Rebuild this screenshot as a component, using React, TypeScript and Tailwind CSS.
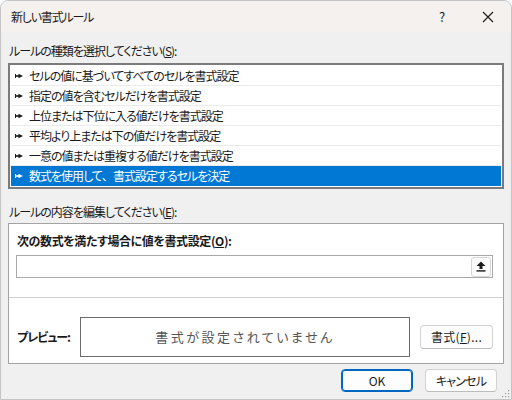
import React from "react";

const rules = [
  "セルの値に基づいてすべてのセルを書式設定",
  "指定の値を含むセルだけを書式設定",
  "上位または下位に入る値だけを書式設定",
  "平均より上または下の値だけを書式設定",
  "一意の値または重複する値だけを書式設定",
  "数式を使用して、書式設定するセルを決定",
];

const Pointer = ({ color }: { color: string }) => (
  <svg width="8" height="6" viewBox="0 0 8 6" className="shrink-0">
    <rect x="0" y="1" width="1" height="4" fill={color} />
    <rect x="1" y="2.2" width="3" height="1.6" fill={color} />
    <path d="M3.5 0.8 L8 3 L3.5 5.2 Z" fill={color} />
  </svg>
);

// full-width comma keeps its em width, as in the original dialog
const RuleText = ({ text }: { text: string }) => {
  const parts = text.split("、");
  return (
    <span className="text-[12px] tracking-[-1px]">
      {parts.map((p, i) => (
        <React.Fragment key={i}>
          {p}
          {i < parts.length - 1 && <span className="inline-block w-[11px]">、</span>}
        </React.Fragment>
      ))}
    </span>
  );
};

const App = () => {
  const selected = 5;
  return (
    <div className="w-[512px] h-[400px] bg-white font-['Noto_Sans_CJK_JP','Noto_Sans',sans-serif] text-[12px] leading-[14px] text-[#1a1a1a] [font-feature-settings:'palt']">
      <div className="w-full h-full flex flex-col rounded-t-[8px] border border-[#c4c4c4] bg-[#f0f0f0] overflow-hidden relative">
        {/* title bar */}
        <div className="h-[31px] shrink-0 bg-[#f4f1ef] flex items-center pl-[10px]">
          <span className="flex-1 pt-[1px] tracking-[-1.2px]">新しい書式ルール</span>
          <span className="w-[12px] text-[13px] mr-[34px] text-center">?</span>
          <svg width="12" height="12" viewBox="0 0 12 12" className="mr-[17px]">
            <path d="M1 1 L11 11 M11 1 L1 11" stroke="#1a1a1a" strokeWidth="1.1" />
          </svg>
        </div>

        <div className="flex flex-col px-[7px]">
          <div className="mt-[12px] pl-[1px] tracking-[-1px]">
            ルールの種類を選択してください(<span className="underline">S</span>):
          </div>

          {/* rule type list */}
          <div className="mt-[5px] h-[126px] border-2 border-[#7b7b7b] bg-white px-[1px] py-[1px]">
            {rules.map((r, i) => (
              <div
                key={i}
                className={
                  i === selected
                    ? "h-[20px] flex items-center gap-[6px] pl-[4px] bg-[#0078d4] text-white"
                    : "h-[20px] flex items-center gap-[6px] pl-[4px] border-b border-[#ebebeb]"
                }
              >
                <Pointer color={i === selected ? "#ffffff" : "#1a1a1a"} />
                <RuleText text={r} />
              </div>
            ))}
          </div>

          <div className="mt-[16px] pl-[1px] tracking-[-1px]">
            ルールの内容を編集してください(<span className="underline">E</span>):
          </div>

          {/* rule description panel */}
          <div className="mt-[4px] h-[141px] border border-[#a3a3a3] bg-white flex flex-col">
            <div className="mt-[10px] pl-[8px] font-bold tracking-[-0.4px]">
              次の数式を満たす場合に値を書式設定(<span className="underline">O</span>):
            </div>
            <div className="mt-[7px] ml-[7px] mr-[10px] h-[23px] border border-[#a9a9a9] flex items-center justify-end pr-[1px]">
              <div className="w-[20px] h-[20px] rounded-[3px] border border-[#d6d6d6] bg-[#fbfbfb] flex items-center justify-center">
                <svg width="10" height="11" viewBox="0 0 10 11">
                  <path d="M5 0.5 L9.5 5 L6.5 5 L6.5 8 L3.5 8 L3.5 5 L0.5 5 Z" fill="#1a1a1a" />
                  <rect x="0.5" y="9.2" width="9" height="1.4" fill="#1a1a1a" />
                </svg>
              </div>
            </div>
            <div className="mt-[19px] border-t border-[#cfcfcf]" />
            <div className="mt-[19px] flex items-center pl-[8px]">
              <span className="w-[63px] font-bold tracking-[-1px]">プレビュー:</span>
              <div className="w-[330px] h-[40px] border border-[#6b6b6b] flex items-center justify-center text-[13px] tracking-[2.5px] text-[#555555]">
                書式が設定されていません
              </div>
              <button className="ml-[10px] w-[73px] h-[24px] rounded-[4px] border border-[#d2d2d2] border-b-[#bdbdbd] bg-[#fdfdfd] text-[12px] tracking-[0.3px]">
                書式(<span className="underline">F</span>)...
              </button>
            </div>
          </div>

          {/* dialog buttons */}
          <div className="mt-[5px] flex justify-end gap-[12px] pr-[7px]">
            <button className="w-[72px] h-[23px] rounded-[4px] border border-[#0067c0] shadow-[inset_0_0_0_1px_#0067c0] bg-[#fdfdfd] text-[12px]">
              OK
            </button>
            <button className="w-[72px] h-[23px] rounded-[4px] border border-[#d2d2d2] border-b-[#bdbdbd] bg-[#fdfdfd] text-[12px] tracking-[-0.8px]">
              キャンセル
            </button>
          </div>
        </div>

        {/* size grip */}
        <svg width="8" height="8" viewBox="0 0 8 8" className="absolute right-[1px] bottom-[1px]">
          <rect x="6" y="0" width="1.2" height="1.2" fill="#9a9a9a" />
          <rect x="3" y="3" width="1.2" height="1.2" fill="#9a9a9a" />
          <rect x="6" y="3" width="1.2" height="1.2" fill="#9a9a9a" />
          <rect x="0" y="6" width="1.2" height="1.2" fill="#9a9a9a" />
          <rect x="3" y="6" width="1.2" height="1.2" fill="#9a9a9a" />
          <rect x="6" y="6" width="1.2" height="1.2" fill="#9a9a9a" />
        </svg>
      </div>
    </div>
  );
};

export default App;
